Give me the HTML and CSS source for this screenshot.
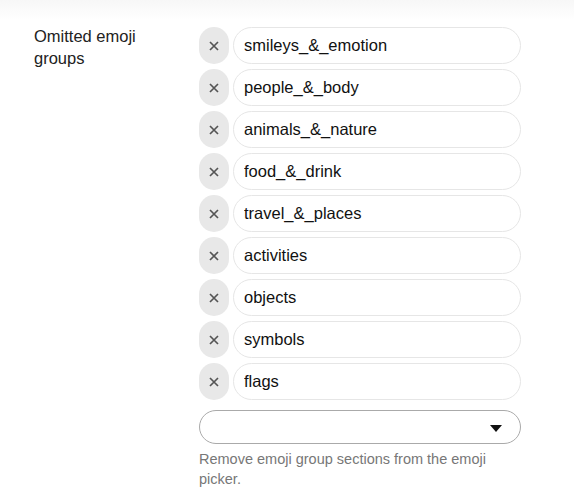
FILE: index.html
```html
<!DOCTYPE html>
<html lang="en">
<head>
  <meta charset="UTF-8" />
  <title>Omitted emoji groups</title>
  <link rel="stylesheet" href="styles.css">
</head>
<body>
  <div class="topshade"></div>

  <div class="setting">
    <label class="setting-label" for="groupPicker">Omitted emoji groups</label>

    <div class="setting-value">
      <div class="chip-row">
        <button class="chip-remove" title="Remove"><svg width="10" height="10" viewBox="0 0 10 10"><path d="M1 1 L9 9 M9 1 L1 9"/></svg></button>
        <input class="chip-input" type="text" value="smileys_&amp;_emotion">
      </div>
      <div class="chip-row">
        <button class="chip-remove" title="Remove"><svg width="10" height="10" viewBox="0 0 10 10"><path d="M1 1 L9 9 M9 1 L1 9"/></svg></button>
        <input class="chip-input" type="text" value="people_&amp;_body">
      </div>
      <div class="chip-row">
        <button class="chip-remove" title="Remove"><svg width="10" height="10" viewBox="0 0 10 10"><path d="M1 1 L9 9 M9 1 L1 9"/></svg></button>
        <input class="chip-input" type="text" value="animals_&amp;_nature">
      </div>
      <div class="chip-row">
        <button class="chip-remove" title="Remove"><svg width="10" height="10" viewBox="0 0 10 10"><path d="M1 1 L9 9 M9 1 L1 9"/></svg></button>
        <input class="chip-input" type="text" value="food_&amp;_drink">
      </div>
      <div class="chip-row">
        <button class="chip-remove" title="Remove"><svg width="10" height="10" viewBox="0 0 10 10"><path d="M1 1 L9 9 M9 1 L1 9"/></svg></button>
        <input class="chip-input" type="text" value="travel_&amp;_places">
      </div>
      <div class="chip-row">
        <button class="chip-remove" title="Remove"><svg width="10" height="10" viewBox="0 0 10 10"><path d="M1 1 L9 9 M9 1 L1 9"/></svg></button>
        <input class="chip-input" type="text" value="activities">
      </div>
      <div class="chip-row">
        <button class="chip-remove" title="Remove"><svg width="10" height="10" viewBox="0 0 10 10"><path d="M1 1 L9 9 M9 1 L1 9"/></svg></button>
        <input class="chip-input" type="text" value="objects">
      </div>
      <div class="chip-row">
        <button class="chip-remove" title="Remove"><svg width="10" height="10" viewBox="0 0 10 10"><path d="M1 1 L9 9 M9 1 L1 9"/></svg></button>
        <input class="chip-input" type="text" value="symbols">
      </div>
      <div class="chip-row">
        <button class="chip-remove" title="Remove"><svg width="10" height="10" viewBox="0 0 10 10"><path d="M1 1 L9 9 M9 1 L1 9"/></svg></button>
        <input class="chip-input" type="text" value="flags">
      </div>

      <div class="picker" id="groupPicker">
        <svg class="caret" width="12" height="7" viewBox="0 0 12 7">
          <path d="M0 0 H12 L6 7 Z" fill="#111"/>
        </svg>
      </div>

      <p class="help">Remove emoji group sections from the emoji picker.</p>
    </div>
  </div>
</body>
</html>
```

FILE: styles.css
```css
* { box-sizing: border-box; }

body {
  margin: 0;
  background: #fff;
  font-family: "Liberation Sans", Arial, sans-serif;
  color: #222;
}

/* faint shadow from the bar above */
.topshade {
  height: 20px;
  background: linear-gradient(to bottom, #f7f7f7, #fff);
}

.setting {
  display: grid;
  grid-template-columns: 165px 322px;
  padding: 5px 0 0 34px;
}

.setting-label {
  font-size: 16.5px;
  line-height: 22px;
  color: #222;
  padding-right: 20px;
}

.setting-value {
  display: flex;
  flex-direction: column;
  gap: 5px;
  margin-top: 2px;
}

.chip-row {
  display: flex;
  gap: 4px;
  height: 37px;
}

.chip-remove {
  width: 30px;
  flex: none;
  border: none;
  border-radius: 15px;
  background: #e8e8e8;
  padding: 0;
  display: flex;
  align-items: center;
  justify-content: center;
  cursor: pointer;
}

.chip-remove svg {
  display: block;
  stroke: #555;
  stroke-width: 1.7;
  fill: none;
}

.chip-input {
  flex: 1;
  border: 1px solid #e6e6e6;
  border-radius: 19px;
  padding: 0 10px;
  font-family: "Liberation Sans", Arial, sans-serif;
  font-size: 16.5px;
  color: #111;
  background: #fff;
  outline: none;
}

.picker {
  margin-top: 5px;
  height: 34px;
  border: 1px solid #aaa;
  border-radius: 17px;
  display: flex;
  align-items: center;
  justify-content: flex-end;
  padding-right: 18px;
}

.caret { display: block; margin-top: 2px; }

.help {
  margin: 0;
  font-size: 14.5px;
  line-height: 20px;
  color: #777;
}
```
